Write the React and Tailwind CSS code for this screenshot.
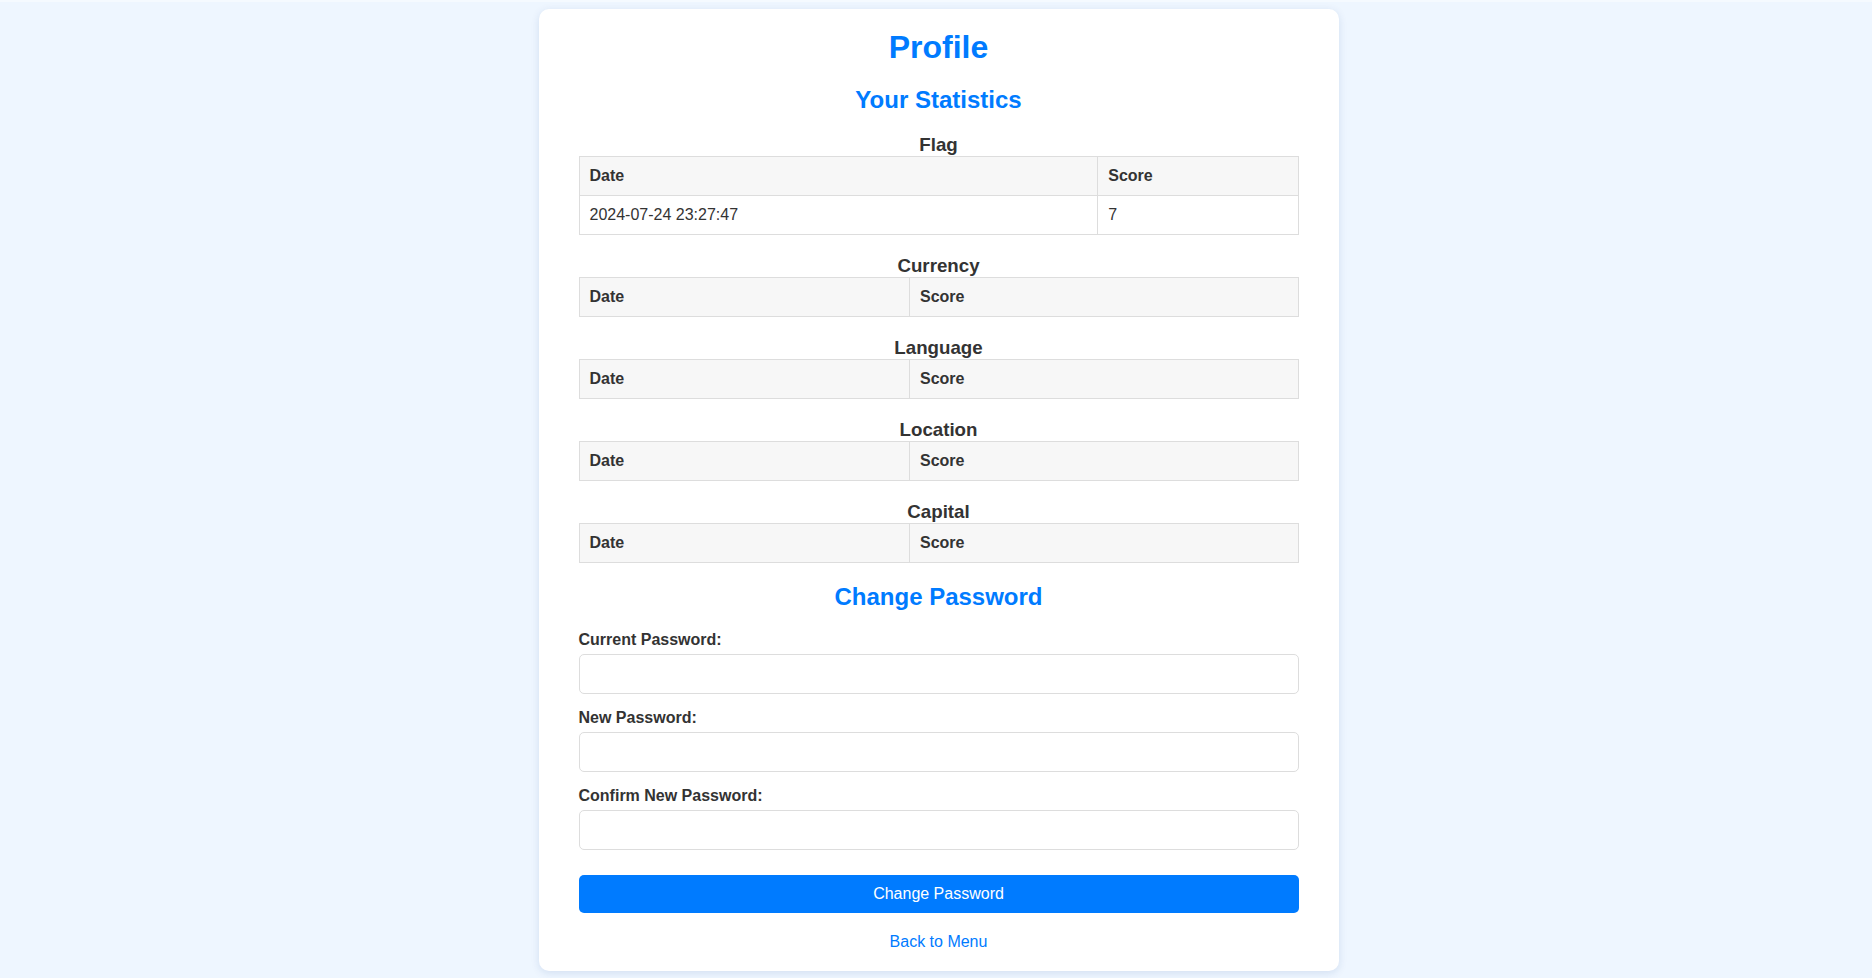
const TABLES = [
  { title: 'Flag', rows: [{ date: '2024-07-24 23:27:47', score: 7 }] },
  { title: 'Currency', rows: [] },
  { title: 'Language', rows: [] },
  { title: 'Location', rows: [] },
  { title: 'Capital', rows: [] },
]

const FIELDS = ['Current Password:', 'New Password:', 'Confirm New Password:']

function StatTable({ title, rows }) {
  return (
    <div>
      <h3 className="text-[18.72px] leading-[22px] font-bold text-center text-[#333]">{title}</h3>
      <table className="w-full border-collapse mb-5 text-[16px] text-[#333]">
        <thead>
          <tr className="bg-[#f7f7f7]">
            <th className="border border-[#ddd] p-[10px] text-left font-bold">Date</th>
            <th className="border border-[#ddd] p-[10px] text-left font-bold">Score</th>
          </tr>
        </thead>
        <tbody>
          {rows.map((r, i) => (
            <tr key={i}>
              <td className="border border-[#ddd] p-[10px]">{r.date}</td>
              <td className="border border-[#ddd] p-[10px]">{r.score}</td>
            </tr>
          ))}
        </tbody>
      </table>
    </div>
  )
}

export default function App() {
  return (
    <div className="min-h-screen bg-[#eef6ff] border-t-2 border-[#f5faff] font-['Liberation_Sans',Arial,sans-serif] leading-[normal] text-[#333]">
      <div className="flex justify-center pl-[5px] pt-[7px] pb-2">
        <div className="w-[800px] bg-white rounded-[10px] shadow-[0_2px_8px_rgba(0,60,140,0.12)] px-10 pt-5 pb-5">
          <h1 className="text-[32px] font-bold text-center text-[#007bff] mb-5">Profile</h1>
          <h2 className="text-[24px] font-bold text-center text-[#007bff] mb-5">Your Statistics</h2>

          {TABLES.map(t => (
            <StatTable key={t.title} title={t.title} rows={t.rows} />
          ))}

          <h2 className="text-[24px] font-bold text-center text-[#007bff] mb-5">Change Password</h2>

          <form onSubmit={e => e.preventDefault()}>
            {FIELDS.map(label => (
              <div key={label}>
                <label className="block font-bold text-[16px] mb-[5px]">{label}</label>
                <input
                  type="password"
                  className="block w-full h-10 border border-[#ddd] rounded-[5px] px-[10px] mb-[15px] focus:outline-none"
                />
              </div>
            ))}
            <button
              type="submit"
              className="block w-full mt-[25px] py-[10px] rounded-[5px] bg-[#007bff] text-white text-[16px]"
            >
              Change Password
            </button>
          </form>

          <div className="text-center mt-5">
            <a href="#" className="text-[#007bff] text-[16px]">Back to Menu</a>
          </div>
        </div>
      </div>
    </div>
  )
}
